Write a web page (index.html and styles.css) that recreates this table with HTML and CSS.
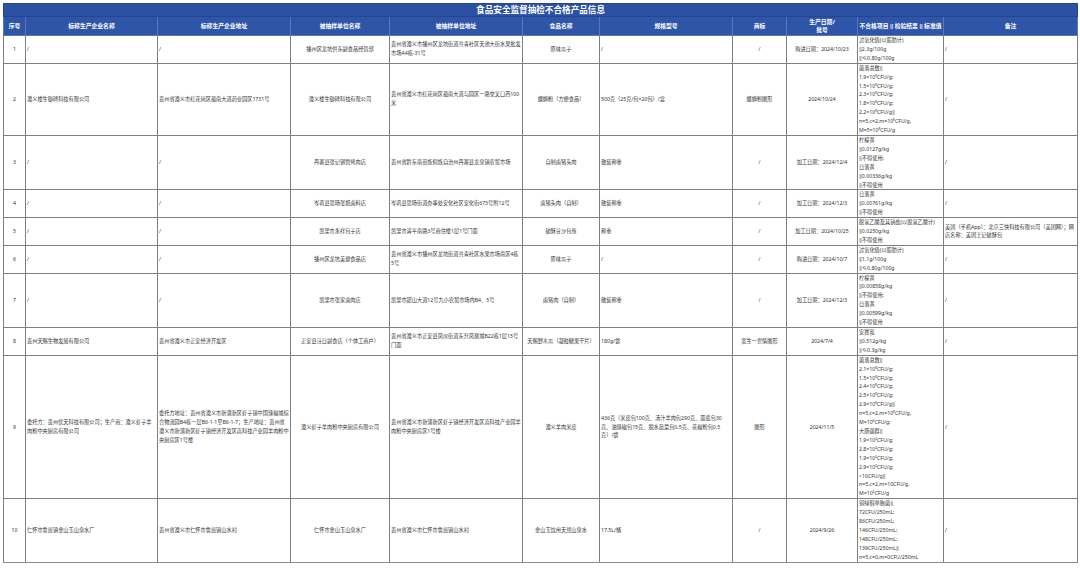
FILE: index.html
```html
<!DOCTYPE html>
<html lang="zh-CN">
<head>
<meta charset="utf-8">
<title>食品安全监督抽检不合格产品信息</title>
<link rel="stylesheet" href="styles.css">
</head>
<body>
<table class="sheet">
<colgroup>
<col class="c1"><col class="c2"><col class="c3"><col class="c4"><col class="c5"><col class="c6"><col class="c7"><col class="c8"><col class="c9"><col class="c10"><col class="c11">
</colgroup>
<thead>
<tr><th class="title" colspan="11">食品安全监督抽检不合格产品信息</th></tr>
<tr class="head">
<th>序号</th><th>标称生产企业名称</th><th>标称生产企业地址</th><th>被抽样单位名称</th><th>被抽样单位地址</th><th>食品名称</th><th>规格型号</th><th>商标</th><th>生产日期/<br>批号</th><th>不合格项目 ‖ 检验结果 ‖ 标准值</th><th>备注</th>
</tr>
</thead>
<tbody>
<tr>
<td class="ctr">1</td><td>/</td><td>/</td><td class="ctr">播州区龙坑供东副食品经营部</td><td>贵州省遵义市播州区龙坑街道共青社区天池大街水果批发市场A4栋-31号</td><td class="ctr">原味瓜子</td><td>/</td><td class="ctr">/</td><td class="ctr">购进日期：2024/10/23</td>
<td class="res">过氧化值(以脂肪计)<br>‖2.3g/100g<br>‖≤0.80g/100g</td><td>/</td>
</tr>
<tr>
<td class="ctr">2</td><td>遵义楼生御碑科技有限公司</td><td>贵州省遵义市红花岗区蔺南大道药业园区1731号</td><td class="ctr">遵义楼生御碑科技有限公司</td><td>贵州省遵义市红花岗区蔺南大道与园区一路交叉口西100米</td><td class="ctr">螺蛳粉（方便食品）</td><td>500克（25克/包×20包）/盒</td><td class="ctr">螺蛳粉图形</td><td class="ctr">2024/10/24</td>
<td class="res">菌落总数‖<br>1.9×10⁵CFU/g;<br>1.5×10⁵CFU/g;<br>2.3×10⁵CFU/g;<br>1.8×10⁵CFU/g;<br>2.2×10⁵CFU/g‖<br>n=5,c=2,m=10⁵CFU/g,<br>M=5×10⁵CFU/g</td><td>/</td>
</tr>
<tr>
<td class="ctr">3</td><td>/</td><td>/</td><td class="ctr">丹寨县张记钢管烤肉店</td><td>贵州省黔东南苗族侗族自治州丹寨县龙泉镇农贸市场</td><td class="ctr">自制卤猪头肉</td><td>散装称重</td><td class="ctr">/</td><td class="ctr">加工日期：2024/12/4</td>
<td class="res">柠檬黄<br>‖0.0127g/kg<br>‖不得使用;<br>日落黄<br>‖0.00336g/kg<br>‖不得使用</td><td>/</td>
</tr>
<tr>
<td class="ctr">4</td><td>/</td><td>/</td><td class="ctr">岑巩县思旸张姐卤料店</td><td>岑巩县思旸街道办事处安化社区安化街673号附12号</td><td class="ctr">卤猪头肉（自制）</td><td>散装称重</td><td class="ctr">/</td><td class="ctr">加工日期：2024/12/3</td>
<td class="res">日落黄<br>‖0.00761g/kg<br>‖不得使用</td><td>/</td>
</tr>
<tr>
<td class="ctr">5</td><td>/</td><td>/</td><td class="ctr">凯里市永祥包子店</td><td>凯里市清平南路3号商住楼1层1号门面</td><td class="ctr">破酥豆沙包卷</td><td>称重</td><td class="ctr">/</td><td class="ctr">加工日期：2024/10/25</td>
<td class="res">脱氢乙酸及其钠盐(以脱氢乙酸计)<br>‖0.0250g/kg<br>‖不得使用</td><td>美团（手机App）：北京三快科技有限公司（美团网）；网店名称：美团王记破酥包</td>
</tr>
<tr>
<td class="ctr">6</td><td>/</td><td>/</td><td class="ctr">播州区龙坑美健食品店</td><td>贵州省遵义市播州区龙坑街道共青社区水果市场南区4栋5号</td><td class="ctr">原味瓜子</td><td>/</td><td class="ctr">/</td><td class="ctr">购进日期：2024/10/7</td>
<td class="res">过氧化值(以脂肪计)<br>‖1.1g/100g<br>‖≤0.80g/100g</td><td>/</td>
</tr>
<tr>
<td class="ctr">7</td><td>/</td><td>/</td><td class="ctr">凯里市张家卤肉店</td><td>凯里市韶山大道12号九小农贸市场内B4、5号</td><td class="ctr">卤猪肉（自制）</td><td>散装称重</td><td class="ctr">/</td><td class="ctr">加工日期：2024/12/3</td>
<td class="res">柠檬黄<br>‖0.00858g/kg<br>‖不得使用;<br>日落黄<br>‖0.00599g/kg<br>‖不得使用</td><td>/</td>
</tr>
<tr>
<td class="ctr">8</td><td>贵州天赐生物发展有限公司</td><td>贵州省遵义市正安经济开发区</td><td class="ctr">正安县汪日副食店（个体工商户）</td><td>贵州省遵义市正安县凤仪街道东升凤凰城B22栋1层15号门面</td><td class="ctr">天赐野木瓜（凝胶糖果干片）</td><td>180g/袋</td><td class="ctr">宽生一世情图形</td><td class="ctr">2024/7/4</td>
<td class="res">安赛蜜<br>‖0.512g/kg<br>‖≤0.3g/kg</td><td>/</td>
</tr>
<tr>
<td class="ctr">9</td><td>委托方：贵州优天科技有限公司；生产商：遵义虾子羊肉粉中央厨房有限公司</td><td>委托方地址：贵州省遵义市新蒲新区虾子镇中国辣椒城综合物流园B4栋一层B6-1-1至B6-1-7；生产地址：贵州省遵义市新蒲新区虾子镇经济开发区高科技产业园羊肉粉中央厨房区1号楼</td><td class="ctr">遵义虾子羊肉粉中央厨房有限公司</td><td>贵州省遵义市新蒲新区虾子镇经济开发区高科技产业园羊肉粉中央厨房区1号楼</td><td class="ctr">遵义羊肉米皮</td><td>436克（米皮包100克、汤汁羊肉包290克、面底包30克、油辣椒包15克、脱水蔬菜包0.5克、花椒粉包0.5克）/袋</td><td class="ctr">图形</td><td class="ctr">2024/11/5</td>
<td class="res">菌落总数‖<br>2.1×10⁵CFU/g;<br>1.5×10⁵CFU/g;<br>2.4×10⁵CFU/g;<br>2.5×10⁵CFU/g;<br>2.9×10⁵CFU/g‖<br>n=5,c=2,m=10⁵CFU/g,<br>M=10⁶CFU/g;<br>大肠菌群‖<br>1.9×10²CFU/g;<br>2.8×10²CFU/g;<br>1.9×10²CFU/g;<br>2.9×10²CFU/g;<br>&lt;10CFU/g‖<br>n=5,c=2,m=10CFU/g,<br>M=10²CFU/g</td><td>/</td>
</tr>
<tr>
<td class="ctr">10</td><td>仁怀市鲁班镇金山玉山泉水厂</td><td>贵州省遵义市仁怀市鲁班镇山水村</td><td class="ctr">仁怀市金山玉山泉水厂</td><td>贵州省遵义市仁怀市鲁班镇山水村</td><td class="ctr">金山玉饮用天然山泉水</td><td>17.5L/桶</td><td class="ctr">/</td><td class="ctr">2024/9/26</td>
<td class="res">铜绿假单胞菌‖<br>72CFU/250mL;<br>86CFU/250mL;<br>146CFU/250mL;<br>148CFU/250mL;<br>139CFU/250mL‖<br>n=5,c=0,m=0CFU/250mL</td><td>/</td>
</tr>
</tbody>
</table>
</body>
</html>
```
FILE: styles.css
```css
html, body {
  margin: 0;
  padding: 0;
  background: #ffffff;
}
body {
  padding: 3px 3px 0 3px;
  font-family: "Noto Sans", "Noto Sans CJK SC", sans-serif;
  color: #333333;
}
.sheet {
  border-collapse: collapse;
  table-layout: fixed;
  width: 1074px;
}
.c1 { width: 22px; }
.c2 { width: 132px; }
.c3 { width: 133px; }
.c4 { width: 99px; }
.c5 { width: 133px; }
.c6 { width: 77px; }
.c7 { width: 133px; }
.c8 { width: 54px; }
.c9 { width: 71px; }
.c10 { width: 86px; }
.c11 { width: 134px; }

.title {
  background: #2c51a3;
  color: #ffffff;
  font-size: 8.6px;
  font-weight: 700;
  height: 12px;
  line-height: 12px;
  padding: 0;
  text-align: center;
  border: 1px solid #24468f;
}
.head th {
  background: #2f55a8;
  color: #ffffff;
  font-size: 5.8px;
  font-weight: 700;
  line-height: 8px;
  height: 18px;
  padding: 0 1px;
  text-align: center;
  vertical-align: middle;
  border: 1px solid #5a77b8;
  border-top-color: #24468f;
}
td {
  border: 1px solid #7f7f7f;
  font-size: 5.2px;
  line-height: 8.9px;
  padding: 0 1px;
  text-align: left;
  vertical-align: middle;
  word-break: break-all;
}
td.ctr {
  text-align: center;
}
td.res {
  white-space: nowrap;
  overflow: hidden;
}
tbody tr:last-child td {
  border-bottom: 1px solid #8a8a8a;
}
```
